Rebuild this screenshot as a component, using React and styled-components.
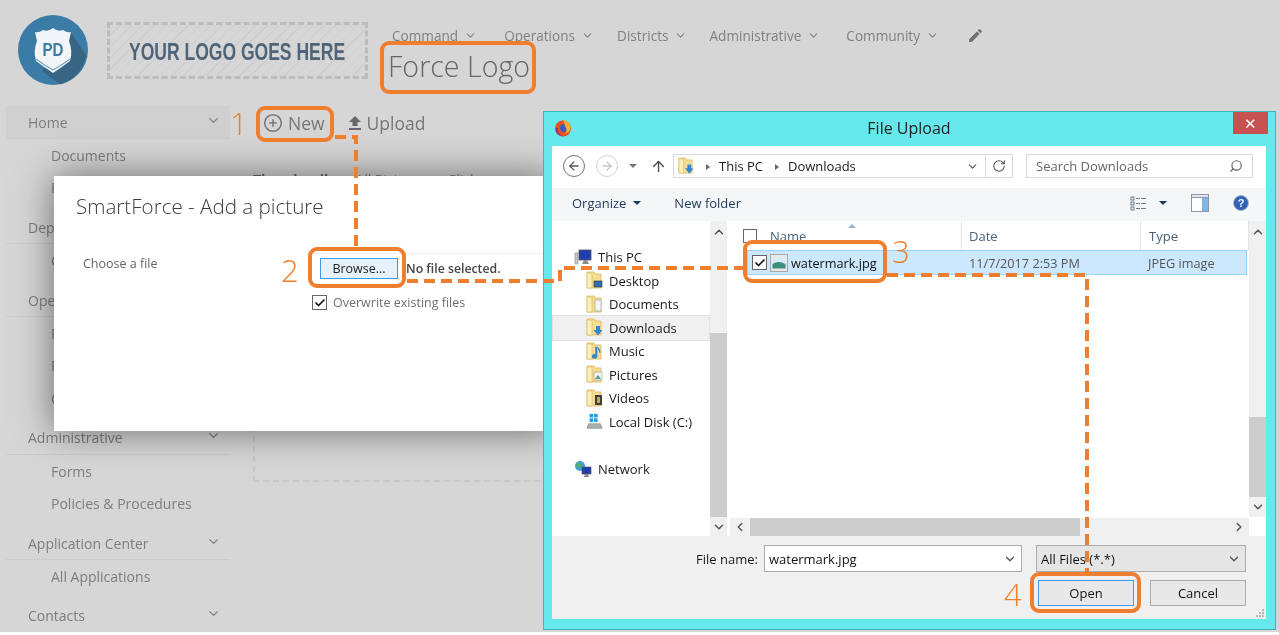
import styled, { createGlobalStyle } from "styled-components";
import { ChevronDown, ChevronUp, ChevronLeft, ChevronRight, CirclePlus, ArrowLeft, ArrowRight, ArrowUp, RotateCw, Search, Check } from "lucide-react";
import { MdEdit } from "react-icons/md";

const ORANGE = "#ef7f2f";

const GlobalStyle = createGlobalStyle`
  html, body {
    margin: 0;
    padding: 0;
    background: #fff;
    overflow: hidden;
  }
  * { box-sizing: border-box; }
`;

const Stage = styled.div`
  position: relative;
  width: 1279px;
  height: 635px;
  overflow: hidden;
  font-family: "Open Sans", "Noto Sans", sans-serif;
  filter: blur(0.35px);
`;
const Page = styled.div`
  height: 632px;
  background: #d6d6d6;
  overflow: hidden;
  color: #7d7d7d;
`;

/* header */
const Header = styled.header`
  display: flex;
  height: 106px;
  padding: 15px 0 0 18px;
`;
const LogoPlaceholder = styled.div`
  display: flex;
  align-items: center;
  justify-content: center;
  width: 261px;
  height: 57px;
  margin: 7px 0 0 19px;
  border: 3px dashed #bcbcbc;
  background: repeating-linear-gradient(135deg, #d6d6d6 0 7px, #cdcdcd 7px 8px);
  color: #4e6479;
  font-family: "Liberation Sans", sans-serif;
  font-weight: 700;
  font-size: 24px;
  white-space: nowrap;
`;
const LogoText = styled.span`
  flex: none;
  margin-top: 2px;
  transform: scaleX(0.73);
`;
const HeaderRight = styled.div`
  display: flex;
  flex-direction: column;
  margin-left: 24px;
`;
const TopNav = styled.nav`
  display: flex;
  align-items: center;
  height: 20px;
  margin-top: 10px;
`;
const TopNavItem = styled.span`
  display: flex;
  align-items: center;
  gap: 6px;
  margin-right: ${(p) => p.$gap}px;
  font-size: 13.6px;
  color: #808080;
`;
const EditIcon = styled(MdEdit)`
  margin-left: 6px;
  color: #707070;
`;
const PageTitle = styled.h1`
  margin: 2px 0 0 -4px;
  font-size: 28.6px;
  line-height: 38px;
  font-weight: 300;
  color: #666;
`;

/* body */
const Body = styled.div`
  display: flex;
`;
const Sidebar = styled.aside`
  width: 224px;
  margin-left: 6px;
  flex: none;
`;
const GroupHead = styled.div`
  display: flex;
  align-items: center;
  justify-content: space-between;
  height: 33px;
  padding: 0 9px 0 22px;
  font-size: 14px;
  border-bottom: 1px solid #cbcbcb;
  background: ${(p) => (p.$active ? "#d0d0d0" : "transparent")};
  svg { margin-bottom: 4px; }
`;
const GroupItems = styled.div`
  padding-bottom: 7.3px;
`;
const GroupItem = styled.div`
  display: flex;
  align-items: center;
  height: 32.5px;
  padding-left: 45px;
  font-size: 14px;
`;
const Main = styled.main`
  flex: 1;
  padding-left: 23px;
`;
const Toolbar = styled.div`
  display: flex;
  align-items: center;
  gap: 23px;
  height: 34px;
  padding-left: 10px;
  font-size: 17.5px;
  color: #777;
`;
const ToolButton = styled.span`
  display: flex;
  align-items: center;
  gap: 5px;
`;
const ViewTabs = styled.div`
  display: flex;
  gap: 20px;
  margin-top: 30px;
  font-size: 14px;
  line-height: 20px;
  b { font-weight: 700; color: #666; }
`;
const DropZone = styled.div`
  width: 800px;
  height: 286px;
  margin-top: 6px;
  border: 2px dashed #c9c9c9;
`;

/* modal */
const Modal = styled.section`
  position: absolute;
  left: 54px;
  top: 176px;
  width: 500px;
  height: 255px;
  padding: 16px 0 0 22px;
  background: #fff;
  box-shadow: 0 0 34px rgba(0, 0, 0, 0.5);
`;
const ModalTitle = styled.h2`
  margin: 0;
  font-size: 20.6px;
  line-height: 28px;
  font-weight: 300;
  color: #3d3d3d;
`;
const FormRow = styled.div`
  display: grid;
  grid-template-columns: 229px 1fr;
  margin: 33px 0 0 7px;
`;
const FormLabel = styled.label`
  padding-top: 1px;
  font-size: 12.5px;
  line-height: 20px;
  color: #666;
`;
const FileRow = styled.div`
  display: flex;
  align-items: center;
  gap: 8px;
  padding: 4px 0 0 8px;
  border-top: 1px solid #eee;
  font-size: 12.3px;
  font-weight: 600;
  color: #444;
`;
const BrowseButton = styled.button`
  width: 78px;
  height: 21px;
  padding: 0;
  border: 1px solid #3c9ae8;
  background: #e5f1fb;
  font: 12.5px "Open Sans", sans-serif;
  color: #222;
`;
const OverwriteRow = styled.div`
  display: flex;
  align-items: center;
  gap: 6px;
  margin-top: 15px;
  font-size: 12.5px;
  color: #6f6f6f;
`;
const CheckBox = styled.span`
  display: inline-flex;
  align-items: center;
  justify-content: center;
  width: ${(p) => p.$size || 15}px;
  height: ${(p) => p.$size || 15}px;
  flex: none;
  border: 1px solid #666;
  background: #fff;
  color: #111;
`;

/* file dialog */
const FileDialog = styled.section`
  position: absolute;
  left: 543px;
  top: 111px;
  width: 733px;
  height: 519px;
  display: flex;
  flex-direction: column;
  padding: 0 9px 10px 8px;
  background: #66e8ec;
  border: 1px solid #3fb4ba;
  font-size: 13px;
  color: #1a1a1a;
`;
const TitleBar = styled.div`
  display: grid;
  grid-template-columns: 1fr auto 1fr;
  align-items: center;
  height: 34px;
  flex: none;
  padding-bottom: 2px;
  svg { margin-left: 2px; }
`;
const DialogTitle = styled.span`
  font-size: 16px;
  color: #222;
`;
const CloseButton = styled.span`
  justify-self: end;
  align-self: start;
  display: flex;
  align-items: center;
  justify-content: center;
  width: 35px;
  height: 22px;
  margin-right: -2px;
  background: #c75050;
  color: #fff;
  font-size: 15px;
`;
const DialogInner = styled.div`
  flex: 1;
  display: flex;
  flex-direction: column;
  background: #fff;
  min-height: 0;
`;
const AddressRow = styled.div`
  display: flex;
  align-items: center;
  height: 42px;
  flex: none;
  padding: 0 13px 2px 11px;
`;
const RoundNav = styled.span`
  display: flex;
  align-items: center;
  justify-content: center;
  width: 22px;
  height: 22px;
  margin-right: ${(p) => p.$gap}px;
  border: 1.5px solid ${(p) => (p.$off ? "#d2d2d2" : "#777")};
  border-radius: 50%;
  color: ${(p) => (p.$off ? "#c8c8c8" : "#555")};
`;
const AddressBox = styled.div`
  display: flex;
  align-items: center;
  width: 340px;
  height: 24px;
  margin-left: 6px;
  border: 1px solid #d9d9d9;
  padding-left: 4px;
`;
const Crumb = styled.span`
  white-space: nowrap;
  &::before {
    content: "";
    display: inline-block;
    margin: 0 9px 1px 12px;
    border-left: 4px solid #666;
    border-top: 3.5px solid transparent;
    border-bottom: 3.5px solid transparent;
  }
`;
const AddressEnd = styled.span`
  display: flex;
  align-items: center;
  margin-left: auto;
  height: 100%;
  color: #555;
`;
const RefreshCell = styled.span`
  display: flex;
  align-items: center;
  justify-content: center;
  width: 27px;
  height: 100%;
  margin-left: 6px;
  border-left: 1px solid #d9d9d9;
`;
const SearchBox = styled.div`
  display: flex;
  align-items: center;
  justify-content: space-between;
  width: 227px;
  height: 24px;
  margin-left: 13px;
  padding: 0 9px;
  border: 1px solid #d9d9d9;
  color: #666;
`;
const SearchGlyph = styled(Search)`
  transform: scaleX(-1);
`;
const CommandBar = styled.div`
  display: flex;
  align-items: center;
  height: 33px;
  flex: none;
  padding: 0 17px 3px 20px;
  background: #f5f6f7;
  color: #1e395b;
`;
const CommandItem = styled.span`
  display: flex;
  align-items: center;
  gap: 7px;
  margin-right: 33px;
`;
const CommandIcons = styled.span`
  display: flex;
  align-items: center;
  gap: 12px;
  margin-left: auto;
`;
const HelpSlot = styled.span`
  display: flex;
  margin-left: 12px;
`;
const Caret = styled.span`
  width: 0;
  height: 0;
  margin-right: ${(p) => p.$gap || 0}px;
  border-top: 4px solid ${(p) => p.$color || "#1e395b"};
  border-left: 4px solid transparent;
  border-right: 4px solid transparent;
`;
const Panes = styled.div`
  display: flex;
  height: 315px;
  flex: none;
`;
const TreePane = styled.div`
  width: 158px;
  padding-top: 24.5px;
  flex: none;
`;
const TreeRow = styled.div`
  display: flex;
  align-items: center;
  gap: 6px;
  height: 23.5px;
  margin: ${(p) => p.$top || 0}px 1px 0 1px;
  padding-left: ${(p) => (p.$root ? 21 : 33)}px;
  background: ${(p) => (p.$active ? "#f0f0f0" : "transparent")};
  outline: ${(p) => (p.$active ? "1px solid #e2e2e2" : "none")};
  white-space: nowrap;
`;
const VScroll = styled.div`
  display: flex;
  flex-direction: column;
  width: 17px;
  height: ${(p) => (p.$h ? `${p.$h}px` : "auto")};
  flex: none;
  background: #f0f0f0;
  color: #555;
`;
const VArrow = styled.span`
  display: flex;
  align-items: center;
  justify-content: center;
  height: ${(p) => p.$h}px;
  flex: none;
`;
const VTrack = styled.div`
  flex: 1;
  display: flex;
  flex-direction: column;
  justify-content: flex-end;
`;
const VThumb = styled.div`
  height: ${(p) => p.$h}px;
  background: #cdcdcd;
`;
const ListColumn = styled.div`
  flex: 1;
  min-width: 0;
  display: flex;
  flex-direction: column;
  margin-left: 3px;
`;
const ListArea = styled.div`
  flex: 1;
  display: flex;
  flex-direction: column;
`;
const ListHead = styled.div`
  position: relative;
  display: grid;
  grid-template-columns: 232px 179px 1fr;
  height: 29px;
  flex: none;
  color: #4c607a;
`;
const ListHeadCell = styled.div`
  display: flex;
  align-items: center;
  gap: 13px;
  padding-left: ${(p) => p.$pad}px;
  border-right: 1px solid #e5e5e5;
`;
const SortMark = styled.span`
  position: absolute;
  left: 118px;
  top: 3px;
  border-bottom: 4px solid #8eb5d8;
  border-left: 4px solid transparent;
  border-right: 4px solid transparent;
`;
const FileRowItem = styled.div`
  display: grid;
  grid-template-columns: 221px 179px 1fr;
  align-items: center;
  height: 25px;
  margin: 0 2px 0 17px;
  background: #cce8ff;
  border: 1px solid #99d1ff;
  font-size: 12.7px;
  color: #555;
`;
const FileNameCell = styled.div`
  display: flex;
  align-items: center;
  gap: 3px;
  padding-left: 4px;
  color: #111;
`;
const HScroll = styled.div`
  display: flex;
  align-items: center;
  height: 18px;
  flex: none;
  background: #f0f0f0;
  color: #555;
`;
const HArrow = styled.span`
  display: flex;
  justify-content: center;
  width: 20px;
  flex: none;
`;
const HTrack = styled.div`
  flex: 1;
  height: 100%;
`;
const HThumb = styled.div`
  width: 330px;
  height: 100%;
  background: #cdcdcd;
`;
const Footer = styled.div`
  position: relative;
  flex: 1;
  display: flex;
  flex-direction: column;
  align-items: flex-end;
  padding: 9px 20px 0 0;
  background: #f0f0f0;
`;
const ResizeGrip = styled.svg`
  position: absolute;
  right: 1px;
  bottom: 1px;
`;
const FooterRow = styled.div`
  display: flex;
  align-items: center;
  height: ${(p) => p.$h}px;
  margin-top: ${(p) => p.$top || 0}px;
`;
const FieldLabel = styled.span`
  margin-right: 6px;
`;
const ComboField = styled.div`
  display: flex;
  align-items: center;
  justify-content: space-between;
  width: ${(p) => p.$w}px;
  height: 27px;
  margin-right: ${(p) => p.$gap || 0}px;
  padding: 0 4px;
  border: 1px solid #acacac;
  background: ${(p) => p.$bg || "#fff"};
  color: #111;
`;
const DialogButton = styled.button`
  width: 96px;
  height: 26px;
  margin-left: ${(p) => p.$gap || 0}px;
  padding: 0;
  border: 1px solid ${(p) => (p.$primary ? "#3c9ae8" : "#acacac")};
  background: #e8e8e8;
  font: 13px "Open Sans", sans-serif;
  color: #111;
`;

/* callouts lying over the screenshot */
const CalloutBox = styled.div`
  position: absolute;
  left: ${(p) => p.$x}px;
  top: ${(p) => p.$y}px;
  width: ${(p) => p.$w}px;
  height: ${(p) => p.$h}px;
  border: 4px solid ${ORANGE};
  border-radius: 9px;
`;
const StepNumber = styled.span`
  position: absolute;
  left: ${(p) => p.$x}px;
  top: ${(p) => p.$y}px;
  font-size: 31px;
  line-height: 36px;
  font-weight: 300;
  color: ${ORANGE};
`;
const DashLayer = styled.svg`
  position: absolute;
  left: 0;
  top: 0;
  pointer-events: none;
`;

const LogoBadge = () => (
  <svg width="70" height="70" viewBox="0 0 70 70">
    <circle cx="35" cy="35" r="35" fill="#3b7ca6" />
    <path d="M24 56 L52 16 L68 40 A35 35 0 0 1 42 69.3 Z" fill="#376583" />
    <path d="M17 17 Q21 18 25 15 Q30 17 35 13 Q40 17 45 15 Q49 18 53 17 L51 26 Q55 36 52 46 Q44 52 35 58 Q26 52 18 46 Q15 36 19 26 Z" fill="#f2f5f7" />
    <path d="M18 44 Q26 50 35 55 Q44 50 52 44" fill="none" stroke="#7ba4bf" strokeWidth="1.2" />
    <text x="35" y="41" textAnchor="middle" textLength="21" lengthAdjust="spacingAndGlyphs" fontFamily="Liberation Sans, sans-serif" fontWeight="700" fontSize="18" fill="#3b7ca6">PD</text>
  </svg>
);

const UploadIcon = () => (
  <svg width="14" height="16" viewBox="0 0 14 16" fill="#666">
    <path d="M7 1 L13 7 H9.5 V11 H4.5 V7 H1 Z" />
    <rect x="1" y="13" width="12" height="2" />
  </svg>
);

const FirefoxIcon = () => (
  <svg width="18" height="18" viewBox="0 0 18 18">
    <circle cx="9" cy="9.5" r="8" fill="#e8501f" />
    <path d="M1.5 9 A8 8 0 0 0 9 17.5 A8 8 0 0 1 4 9 Z" fill="#7a3a9a" />
    <circle cx="10" cy="9" r="4" fill="#3b5bc4" />
    <path d="M10 1 Q17 4 16.5 10 Q15 14 11 15 Q14 11 11 7 Q10 4 10 1 Z" fill="#fbb02a" />
  </svg>
);

// small folder with an optional badge for what the folder holds
const FolderIcon = ({ badge, size = 17 }) => (
  <svg width={size} height={size + 2} viewBox="0 0 17 19">
    <path d="M1 1 H8 L9 3 H15 V17 H1 Z" fill="#f5dd94" stroke="#d9b95c" strokeWidth="0.8" />
    <rect x="1" y="2" width="5" height="15" fill="#fbeebb" stroke="#d9b95c" strokeWidth="0.6" />
    {badge === "desktop" && <rect x="8" y="10" width="8" height="6" fill="#2f6fb5" stroke="#333" strokeWidth="0.6" />}
    {badge === "docs" && <rect x="9" y="5" width="6" height="11" fill="#f4f4f4" stroke="#9a9a9a" strokeWidth="0.6" />}
    {badge === "down" && <path d="M10 8 H14 V12 H16.5 L12 17.5 L7.5 12 H10 Z" fill="#2e86d6" />}
    {badge === "music" && <path d="M11 5 V14 A2.5 2 0 1 1 9.5 12.5 V5 Z M11 5 Q15 7 14 11" fill="#2e86d6" stroke="#2e86d6" strokeWidth="0.6" />}
    {badge === "pics" && <g><rect x="8" y="7" width="8" height="8" fill="#eef4f6" stroke="#9a9a9a" strokeWidth="0.6" /><path d="M9 14 L12 10 L15 14 Z" fill="#5c9a8a" /></g>}
    {badge === "video" && <g><rect x="9" y="6" width="7" height="10" fill="#3d3d3d" /><rect x="11" y="8" width="3" height="6" fill="#c7a45b" /></g>}
  </svg>
);

const PcIcon = () => (
  <svg width="18" height="17" viewBox="0 0 18 17">
    <rect x="1" y="4" width="3" height="11" fill="#c9c9c9" stroke="#888" strokeWidth="0.6" />
    <rect x="5" y="1" width="12" height="10" fill="#1f3fae" stroke="#555" strokeWidth="0.8" />
    <path d="M8 15 H15 L13 11 H10 Z" fill="#8a8a8a" />
  </svg>
);

const DiskIcon = () => (
  <svg width="17" height="19" viewBox="0 0 19 19">
    <rect x="4" y="1" width="4" height="4" fill="#17a0e8" />
    <rect x="9" y="1" width="4" height="4" fill="#17a0e8" />
    <rect x="4" y="6" width="4" height="4" fill="#17a0e8" />
    <rect x="9" y="6" width="4" height="4" fill="#17a0e8" />
    <path d="M3 12 H16 L18 17 H1 Z" fill="#a9b0b4" stroke="#6f777b" strokeWidth="0.6" />
  </svg>
);

const NetworkIcon = () => (
  <svg width="18" height="18" viewBox="0 0 18 18">
    <circle cx="6" cy="6" r="5" fill="#3aa3d8" />
    <path d="M2 4 Q5 2 7 4 Q8 7 4 8 Z" fill="#5ab04a" />
    <rect x="8" y="7" width="9" height="7" fill="#1f3fae" stroke="#555" strokeWidth="0.7" />
    <path d="M10 17 H15 L14 14 H11 Z" fill="#888" />
  </svg>
);

const ThumbIcon = () => (
  <svg width="18" height="18" viewBox="0 0 18 18">
    <rect x="0.5" y="0.5" width="17" height="17" fill="#e8e8e8" stroke="#a8a8a8" />
    <rect x="2.5" y="3.5" width="13" height="11" fill="#d6ecf4" />
    <path d="M2.5 10 Q8 6 15.5 10 V14.5 H2.5 Z" fill="#3f8f7f" />
  </svg>
);

const ViewsIcon = () => (
  <svg width="17" height="17" viewBox="0 0 17 17" fill="#6d7b8c">
    <rect x="1" y="2" width="3" height="3" fill="none" stroke="#6d7b8c" />
    <rect x="1" y="7" width="3" height="3" fill="none" stroke="#6d7b8c" />
    <rect x="1" y="12" width="3" height="3" fill="none" stroke="#6d7b8c" />
    <rect x="6" y="3" width="4" height="1" />
    <rect x="11" y="3" width="5" height="1" />
    <rect x="6" y="8" width="4" height="1" />
    <rect x="11" y="8" width="5" height="1" />
    <rect x="6" y="13" width="4" height="1" />
    <rect x="11" y="13" width="5" height="1" />
  </svg>
);

const PreviewPaneIcon = () => (
  <svg width="18" height="18" viewBox="0 0 18 18">
    <rect x="0.5" y="0.5" width="17" height="17" fill="#fff" stroke="#8a97a5" />
    <rect x="0.5" y="0.5" width="17" height="3" fill="#e3e8ee" stroke="#8a97a5" />
    <rect x="11" y="4" width="6" height="13" fill="#7fb8e6" />
  </svg>
);

const HelpIcon = () => (
  <svg width="16" height="16" viewBox="0 0 16 16">
    <circle cx="8" cy="8" r="7.5" fill="#2f62b8" stroke="#aab6c6" />
    <text x="8" y="12" textAnchor="middle" fontFamily="Liberation Sans, sans-serif" fontWeight="700" fontSize="11" fill="#fff">?</text>
  </svg>
);

const SIDE_GROUPS = [
  { name: "Home", active: true, items: ["Documents", "Pictures"] },
  { name: "Departments", items: ["Calendar"] },
  { name: "Operations", items: ["Reports", "Records", "Cases"] },
  { name: "Administrative", items: ["Forms", "Policies & Procedures"] },
  { name: "Application Center", items: ["All Applications"] },
  { name: "Contacts", items: [] },
];

const TOP_NAV = [
  { name: "Command", gap: 27 },
  { name: "Operations", gap: 23 },
  { name: "Districts", gap: 22 },
  { name: "Administrative", gap: 26 },
  { name: "Community", gap: 22 },
];

const TREE = [
  { name: "This PC", root: true, icon: <PcIcon /> },
  { name: "Desktop", icon: <FolderIcon badge="desktop" /> },
  { name: "Documents", icon: <FolderIcon badge="docs" /> },
  { name: "Downloads", active: true, icon: <FolderIcon badge="down" /> },
  { name: "Music", icon: <FolderIcon badge="music" /> },
  { name: "Pictures", icon: <FolderIcon badge="pics" /> },
  { name: "Videos", icon: <FolderIcon badge="video" /> },
  { name: "Local Disk (C:)", icon: <DiskIcon /> },
  { name: "Network", root: true, top: 24, icon: <NetworkIcon /> },
];

export default function App() {
  return (
    <Stage>
      <GlobalStyle />
      <Page>
        <Header>
          <LogoBadge />
          <LogoPlaceholder>
            <LogoText>YOUR LOGO GOES HERE</LogoText>
          </LogoPlaceholder>
          <HeaderRight>
            <TopNav>
              {TOP_NAV.map((item) => (
                <TopNavItem key={item.name} $gap={item.gap}>
                  {item.name}
                  <ChevronDown size={13} strokeWidth={2} />
                </TopNavItem>
              ))}
              <EditIcon size={17} />
            </TopNav>
            <PageTitle>Force Logo</PageTitle>
          </HeaderRight>
        </Header>
        <Body>
          <Sidebar>
            {SIDE_GROUPS.map((group) => (
              <div key={group.name}>
                <GroupHead $active={group.active}>
                  {group.name}
                  <ChevronDown size={15} strokeWidth={2} />
                </GroupHead>
                <GroupItems>
                  {group.items.map((item) => (
                    <GroupItem key={item}>{item}</GroupItem>
                  ))}
                </GroupItems>
              </div>
            ))}
          </Sidebar>
          <Main>
            <Toolbar>
              <ToolButton>
                <CirclePlus size={20} strokeWidth={1.8} />
                New
              </ToolButton>
              <ToolButton>
                <UploadIcon />
                Upload
              </ToolButton>
            </Toolbar>
            <ViewTabs>
              <b>Thumbnails</b>
              <span>All Pictures</span>
              <span>Click</span>
            </ViewTabs>
            <DropZone />
          </Main>
        </Body>
      </Page>

      <Modal>
        <ModalTitle>SmartForce - Add a picture</ModalTitle>
        <FormRow>
          <FormLabel>Choose a file</FormLabel>
          <div>
            <FileRow>
              <BrowseButton>Browse...</BrowseButton>
              No file selected.
            </FileRow>
            <OverwriteRow>
              <CheckBox>
                <Check size={12} strokeWidth={3.5} />
              </CheckBox>
              Overwrite existing files
            </OverwriteRow>
          </div>
        </FormRow>
      </Modal>

      <FileDialog>
        <TitleBar>
          <FirefoxIcon />
          <DialogTitle>File Upload</DialogTitle>
          <CloseButton>✕</CloseButton>
        </TitleBar>
        <DialogInner>
          <AddressRow>
            <RoundNav $gap={11}>
              <ArrowLeft size={14} strokeWidth={2.2} />
            </RoundNav>
            <RoundNav $off $gap={11}>
              <ArrowRight size={14} strokeWidth={2.2} />
            </RoundNav>
            <Caret $color="#777" $gap={13} />
            <ArrowUp size={17} strokeWidth={1.8} color="#444" />
            <AddressBox>
              <FolderIcon badge="down" size={16} />
              <Crumb>This PC</Crumb>
              <Crumb>Downloads</Crumb>
              <AddressEnd>
                <ChevronDown size={13} strokeWidth={2} />
                <RefreshCell>
                  <RotateCw size={14} strokeWidth={1.8} />
                </RefreshCell>
              </AddressEnd>
            </AddressBox>
            <SearchBox>
              Search Downloads
              <SearchGlyph size={14} strokeWidth={2} />
            </SearchBox>
          </AddressRow>
          <CommandBar>
            <CommandItem>
              Organize
              <Caret />
            </CommandItem>
            <CommandItem>New folder</CommandItem>
            <CommandIcons>
              <ViewsIcon />
              <Caret $gap={12} />
              <PreviewPaneIcon />
              <HelpSlot>
                <HelpIcon />
              </HelpSlot>
            </CommandIcons>
          </CommandBar>
          <Panes>
            <TreePane>
              {TREE.map((row) => (
                <TreeRow key={row.name} $root={row.root} $active={row.active} $top={row.top}>
                  {row.icon}
                  {row.name}
                </TreeRow>
              ))}
            </TreePane>
            <VScroll>
              <VArrow $h={22}>
                <ChevronUp size={14} strokeWidth={2.5} />
              </VArrow>
              <VTrack>
                <VThumb $h={184} />
              </VTrack>
              <VArrow $h={19}>
                <ChevronDown size={14} strokeWidth={2.5} />
              </VArrow>
            </VScroll>
            <ListColumn>
              <ListArea>
                <ListHead>
                  <SortMark />
                  <ListHeadCell $pad={13}>
                    <CheckBox $size={14} />
                    Name
                  </ListHeadCell>
                  <ListHeadCell $pad={7}>Date</ListHeadCell>
                  <ListHeadCell $pad={8}>Type</ListHeadCell>
                </ListHead>
                <FileRowItem>
                  <FileNameCell>
                    <CheckBox $size={15}>
                      <Check size={12} strokeWidth={3.5} />
                    </CheckBox>
                    <ThumbIcon />
                    watermark.jpg
                  </FileNameCell>
                  <span>11/7/2017 2:53 PM</span>
                  <span>JPEG image</span>
                </FileRowItem>
              </ListArea>
              <HScroll>
                <HArrow>
                  <ChevronLeft size={14} strokeWidth={2.5} />
                </HArrow>
                <HTrack>
                  <HThumb />
                </HTrack>
                <HArrow>
                  <ChevronRight size={14} strokeWidth={2.5} />
                </HArrow>
              </HScroll>
            </ListColumn>
            <VScroll $h={296}>
              <VArrow $h={22}>
                <ChevronUp size={14} strokeWidth={2.5} />
              </VArrow>
              <VTrack>
                <VThumb $h={80} />
              </VTrack>
              <VArrow $h={20}>
                <ChevronDown size={14} strokeWidth={2.5} />
              </VArrow>
            </VScroll>
          </Panes>
          <Footer>
            <FooterRow $h={27}>
              <FieldLabel>File name:</FieldLabel>
              <ComboField $w={258} $gap={14}>
                watermark.jpg
                <ChevronDown size={14} strokeWidth={2.2} color="#555" />
              </ComboField>
              <ComboField $w={210} $bg="#e5e5e5">
                All Files (*.*)
                <ChevronDown size={14} strokeWidth={2.2} color="#555" />
              </ComboField>
            </FooterRow>
            <FooterRow $h={26} $top={8}>
              <DialogButton $primary>Open</DialogButton>
              <DialogButton $gap={16}>Cancel</DialogButton>
            </FooterRow>
            <ResizeGrip width="9" height="9" viewBox="0 0 9 9" fill="#b5b5b5">
              <rect x="6" y="0" width="2" height="2" />
              <rect x="3" y="3" width="2" height="2" />
              <rect x="6" y="3" width="2" height="2" />
              <rect x="0" y="6" width="2" height="2" />
              <rect x="3" y="6" width="2" height="2" />
              <rect x="6" y="6" width="2" height="2" />
            </ResizeGrip>
          </Footer>
        </DialogInner>
      </FileDialog>

      <DashLayer width="1279" height="635" fill="none" stroke={ORANGE} strokeWidth="4" strokeDasharray="11 6">
        <path d="M335 137 H356 V247" />
        <path d="M407 281 H560 V268 H743" />
        <path d="M887 275 H1087 V572" />
      </DashLayer>

      <CalloutBox $x={380} $y={41} $w={156} $h={53} />
      <CalloutBox $x={256} $y={106} $w={78} $h={36} />
      <CalloutBox $x={308} $y={247} $w={98} $h={41} />
      <CalloutBox $x={743} $y={240} $w={144} $h={43} />
      <CalloutBox $x={1030} $y={572} $w={111} $h={41} />
      <StepNumber $x={230} $y={105}>1</StepNumber>
      <StepNumber $x={281} $y={252}>2</StepNumber>
      <StepNumber $x={892} $y={233}>3</StepNumber>
      <StepNumber $x={1004} $y={576}>4</StepNumber>
    </Stage>
  );
}
